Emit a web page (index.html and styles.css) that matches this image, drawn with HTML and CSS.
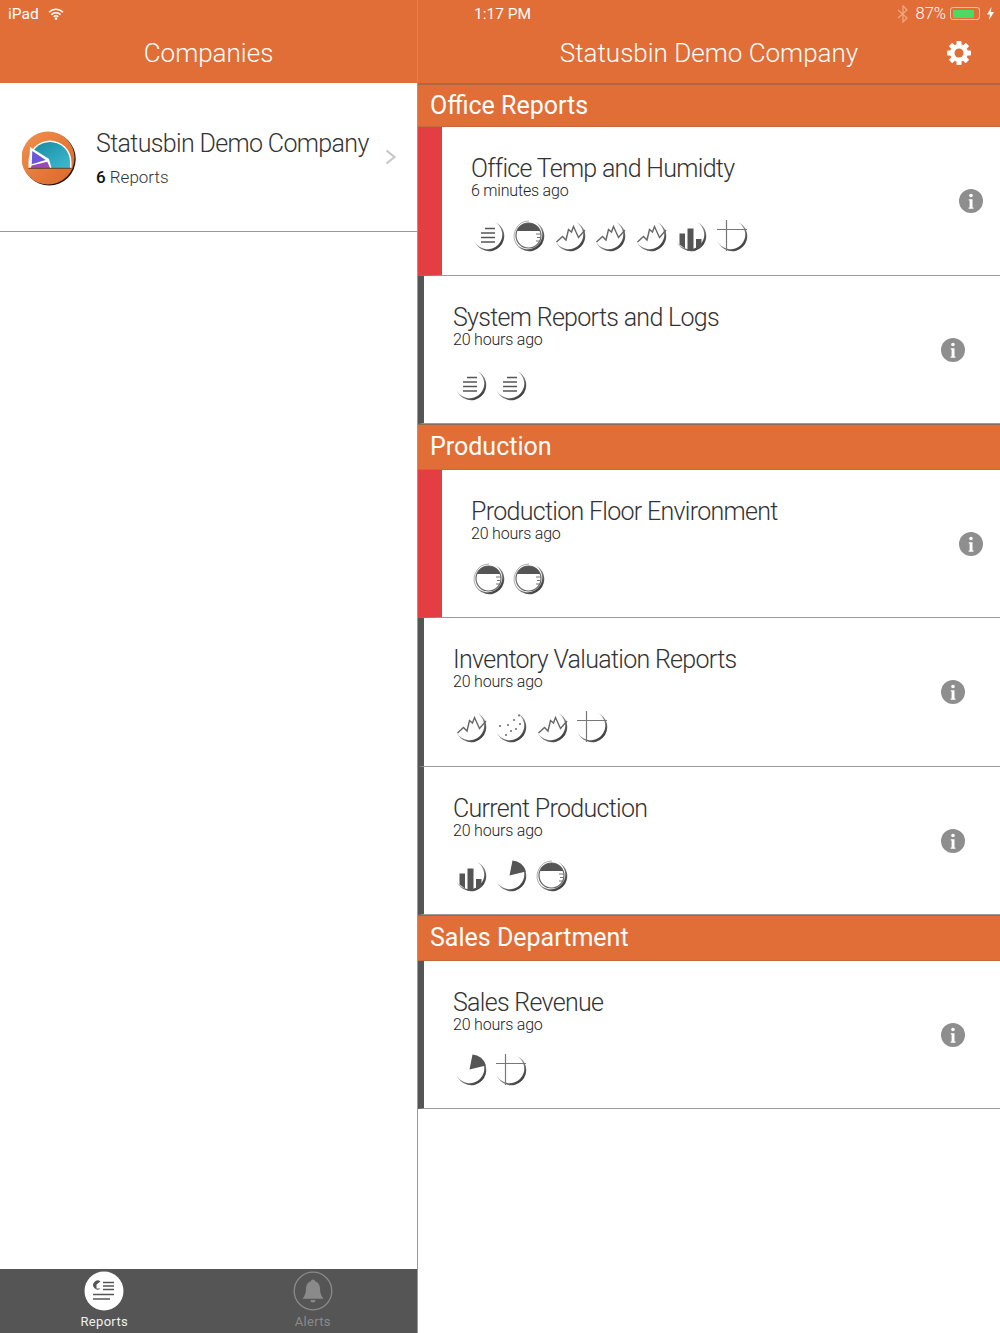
FILE: index.html
```html
<!DOCTYPE html>
<html lang="en">
<head>
  <meta charset="UTF-8">
  <meta name="viewport" content="width=device-width, initial-scale=1.0">
  <link rel="stylesheet" href="styles.css">
  <title>Statusbin</title>
</head>
<body>

  <!-- shared report type icons -->
  <svg class="defs" width="0" height="0">
    <defs>
      <linearGradient id="arc" gradientUnits="userSpaceOnUse" x1="5" y1="5" x2="26" y2="28">
        <stop offset="0.2" stop-color="#cfcfcf"/>
        <stop offset="0.55" stop-color="#858585"/>
        <stop offset="1" stop-color="#3a3a3a"/>
      </linearGradient>
      <symbol id="base" viewBox="0 0 32 32">
        <path d="M21 1.500A15.300 15.300 0 1 1 1.500 21A14.600 14.600 0 1 0 21 1.500Z" fill="url(#arc)"/>
      </symbol>
      <symbol id="i-list" viewBox="0 0 32 32">
        <use href="#base"/>
        <path d="M12 8.500h10M8 13h14M8 17.500h14M8 22h14" stroke="#555" stroke-width="1.500"/>
      </symbol>
      <symbol id="i-gauge" viewBox="0 0 32 32">
        <use href="#base"/>
        <path d="M16 1A15 15 0 0 0 5 26" fill="none" stroke="#999" stroke-width="0.800"/>
        <circle cx="15.500" cy="15.500" r="12.500" fill="none" stroke="#666" stroke-width="1.200"/>
        <path d="M3.800 11A12.500 12.500 0 0 1 27.200 11Z" fill="#555"/>
        <path d="M23 14h4.500M24 17.500h3.500M23 21h3.500" stroke="#777" stroke-width="1"/>
      </symbol>
      <symbol id="i-line" viewBox="0 0 32 32">
        <use href="#base"/>
        <path d="M2.500 22L8.500 16.500L12 20L14.500 9.500L17.500 12L19.500 6.500L24.500 17.500L31 10" fill="none" stroke="#666" stroke-width="1.400"/>
      </symbol>
      <symbol id="i-bars" viewBox="0 0 32 32">
        <use href="#base"/>
        <path d="M4.500 13.500h5.500V28.500L4.500 24.500ZM12.500 8.500h6V30.500h-6ZM21 19h5.500V26.500L21 29.500Z" fill="#555"/>
      </symbol>
      <symbol id="i-table" viewBox="0 0 32 32">
        <use href="#base"/>
        <path d="M1 9.500H31M10.500 0V31" fill="none" stroke="#777" stroke-width="1.200"/>
      </symbol>
      <symbol id="i-pie" viewBox="0 0 32 32">
        <use href="#base"/>
        <path d="M14.500 15.500L17.500 0.500A15 15 0 0 1 31 11.500Z" fill="#555"/>
      </symbol>
      <symbol id="i-dots" viewBox="0 0 32 32">
        <use href="#base"/>
        <g fill="#666">
          <circle cx="5" cy="15" r="1"/><circle cx="13" cy="14" r="1"/><circle cx="19" cy="9" r="1"/>
          <circle cx="24" cy="4.500" r="1"/><circle cx="21" cy="18" r="1"/><circle cx="11" cy="24" r="1"/>
          <circle cx="25" cy="13" r="1"/><circle cx="16" cy="20" r="1"/>
        </g>
      </symbol>
      <symbol id="i-info" viewBox="0 0 24 24">
        <circle cx="12" cy="12" r="12" fill="#8e8e8e"/>
        <circle cx="12" cy="6.500" r="1.800" fill="#fff"/>
        <path d="M9.800 10.200h3.700v8.300h1v1.200H9.600v-1.200h1v-7H9.800Z" fill="#fff"/>
      </symbol>
    </defs>
  </svg>

  <aside class="sidebar">
    <header class="top">
      <div class="status">
        <span>iPad</span>
        <svg class="wifi" width="16" height="12" viewBox="0 0 16 12">
          <path d="M1 4.200a10 10 0 0 1 14 0M3.400 6.600a6.600 6.600 0 0 1 9.200 0M5.700 8.800a3.300 3.300 0 0 1 4.600 0" fill="none" stroke="#fff" stroke-width="1.500"/>
          <circle cx="8" cy="10.600" r="1.300" fill="#fff"/>
        </svg>
      </div>
      <h1>Companies</h1>
    </header>

    <div class="company">
      <svg class="logo" width="56" height="56" viewBox="0 0 56 56">
        <defs>
          <linearGradient id="logo-bg" x1="0" y1="0" x2="1" y2="1">
            <stop offset="0" stop-color="#f2904e"/>
            <stop offset="1" stop-color="#d9682a"/>
          </linearGradient>
          <linearGradient id="logo-teal" x1="0" y1="0" x2="1" y2="1">
            <stop offset="0" stop-color="#17889f"/>
            <stop offset="1" stop-color="#3cbbd2"/>
          </linearGradient>
        </defs>
        <circle cx="27.200" cy="28" r="26.500" fill="#1c1410"/>
        <circle cx="26" cy="27" r="26.500" fill="url(#logo-bg)"/>
        <path d="M6.500 37V31a21.500 21.500 0 0 1 43 0v6Z" fill="#fff"/>
        <path d="M8 37V31a20 20 0 0 1 40 0v6Z" fill="url(#logo-teal)"/>
        <path d="M8 16L27 28L29.500 37H7Z" fill="#fff"/>
        <path d="M10.300 20L23.700 29L9.700 33.300Z" fill="#6a56d6"/>
        <path d="M9.700 34.500L25.300 30.700L28 37H8.700Z" fill="#9c48b8"/>
        <path d="M6.500 36.800H49.500V38H6.500Z" fill="#7a4a2c"/>
      </svg>
      <div class="company-text">
        <h2>Statusbin Demo Company</h2>
        <p><b>6</b> Reports</p>
      </div>
      <svg class="chevron" width="12" height="16" viewBox="0 0 12 16">
        <path d="M1.500 1.500L9.500 8L1.500 14.500" fill="none" stroke="#c7c7cc" stroke-width="2.200"/>
      </svg>
    </div>

    <nav class="tabs">
      <div class="tab active">
        <svg width="40" height="40" viewBox="0 0 40 40">
          <circle cx="20" cy="20" r="19.500" fill="#fff"/>
          <path d="M16.500 10.500A4.500 4.500 0 1 0 16.500 17.500H12.500V13.500Z" fill="#555"/>
          <path d="M19 11.500h11M19 15h11M19 18.500h11M9 23.500h21M9 28h17" stroke="#555" stroke-width="1.400"/>
        </svg>
        <span>Reports</span>
      </div>
      <div class="tab">
        <svg width="40" height="40" viewBox="0 0 40 40">
          <circle cx="20" cy="20" r="18.800" fill="none" stroke="#8a8a8a" stroke-width="1.300"/>
          <path d="M20 8.500c1.200 0 2 .8 2 1.800 3.500 1 5 4 5 8 0 4 1.500 7 3.500 9.500h-21c2-2.500 3.500-5.500 3.500-9.500 0-4 1.500-7 5-8 0-1 .8-1.800 2-1.800ZM17.500 29h5a2.500 2.500 0 0 1-5 0Z" fill="#8a8a8a"/>
        </svg>
        <span>Alerts</span>
      </div>
    </nav>
  </aside>

  <main class="content">
    <header class="top top-main">
      <div class="status status-main">
        <span class="clock">1:17 PM</span>
        <span class="status-right">
          <svg class="bt" width="12" height="18" viewBox="0 0 12 18">
            <path d="M1 5L10 13L6 17V1L10 5L1 13" fill="none" stroke="#f0a67f" stroke-width="1.300"/>
          </svg>
          <span class="percent">87%</span>
          <span class="battery"><span class="battery-fill"></span></span>
          <svg class="bolt" width="7" height="13" viewBox="0 0 7 13">
            <path d="M4.500 0L0 7.500H3L2 13L7 5H3.800Z" fill="#fff"/>
          </svg>
        </span>
      </div>
      <div class="title-row">
        <h1>Statusbin Demo Company</h1>
        <svg class="gear" width="26" height="26" viewBox="0 0 26 26">
          <g fill="#fff">
            <rect x="10.500" y="1" width="5" height="24" rx="0.800"/>
            <rect x="10.500" y="1" width="5" height="24" rx="0.800" transform="rotate(45 13 13)"/>
            <rect x="10.500" y="1" width="5" height="24" rx="0.800" transform="rotate(90 13 13)"/>
            <rect x="10.500" y="1" width="5" height="24" rx="0.800" transform="rotate(135 13 13)"/>
          </g>
          <circle cx="13" cy="13" r="7" fill="none" stroke="#fff" stroke-width="4"/>
          <circle cx="13" cy="13" r="4.500" fill="#e06e36"/>
        </svg>
      </div>
    </header>

    <h3 class="section first">Office Reports</h3>
    <article class="report alert">
      <div class="report-body">
        <h4>Office Temp and Humidty</h4>
        <p>6 minutes ago</p>
        <div class="icons">
          <svg><use href="#i-list"/></svg>
          <svg><use href="#i-gauge"/></svg>
          <svg><use href="#i-line"/></svg>
          <svg><use href="#i-line"/></svg>
          <svg><use href="#i-line"/></svg>
          <svg><use href="#i-bars"/></svg>
          <svg><use href="#i-table"/></svg>
        </div>
      </div>
      <svg class="info"><use href="#i-info"/></svg>
    </article>
    <article class="report">
      <div class="report-body">
        <h4>System Reports and Logs</h4>
        <p>20 hours ago</p>
        <div class="icons">
          <svg><use href="#i-list"/></svg>
          <svg><use href="#i-list"/></svg>
        </div>
      </div>
      <svg class="info"><use href="#i-info"/></svg>
    </article>

    <h3 class="section">Production</h3>
    <article class="report alert">
      <div class="report-body">
        <h4>Production Floor Environment</h4>
        <p>20 hours ago</p>
        <div class="icons">
          <svg><use href="#i-gauge"/></svg>
          <svg><use href="#i-gauge"/></svg>
        </div>
      </div>
      <svg class="info"><use href="#i-info"/></svg>
    </article>
    <article class="report">
      <div class="report-body">
        <h4>Inventory Valuation Reports</h4>
        <p>20 hours ago</p>
        <div class="icons">
          <svg><use href="#i-line"/></svg>
          <svg><use href="#i-dots"/></svg>
          <svg><use href="#i-line"/></svg>
          <svg><use href="#i-table"/></svg>
        </div>
      </div>
      <svg class="info"><use href="#i-info"/></svg>
    </article>
    <article class="report">
      <div class="report-body">
        <h4>Current Production</h4>
        <p>20 hours ago</p>
        <div class="icons">
          <svg><use href="#i-bars"/></svg>
          <svg><use href="#i-pie"/></svg>
          <svg><use href="#i-gauge"/></svg>
        </div>
      </div>
      <svg class="info"><use href="#i-info"/></svg>
    </article>

    <h3 class="section">Sales Department</h3>
    <article class="report">
      <div class="report-body">
        <h4>Sales Revenue</h4>
        <p>20 hours ago</p>
        <div class="icons">
          <svg><use href="#i-pie"/></svg>
          <svg><use href="#i-table"/></svg>
        </div>
      </div>
      <svg class="info"><use href="#i-info"/></svg>
    </article>
  </main>

</body>
</html>
```

FILE: styles.css
```css
:root {
  --orange: #e06e36;
  --dark: #555555;
  --line: #9a9a9a;
  --red: #e33e42;
  --text: #333333;
}

* {
  margin: 0;
  padding: 0;
  box-sizing: border-box;
}

html, body {
  height: 1333px;
  overflow: hidden;
}

body {
  display: flex;
  background-color: #fff;
  font-family: Roboto, "Liberation Sans", sans-serif;
  font-weight: 300;
  color: var(--text);
}

.defs {
  position: absolute;
}

/* headers */
.top {
  background-color: var(--orange);
  color: #fff;
  height: 83px;
  display: flex;
  flex-direction: column;
}

.top h1 {
  font-size: 26px;
  font-weight: 300;
  line-height: 30px;
  text-align: center;
}

.status {
  display: flex;
  align-items: center;
  gap: 9px;
  height: 27px;
  padding-left: 8px;
  font-size: 15.500px;
  font-weight: 400;
  flex-shrink: 0;
}

.sidebar .top h1 {
  margin-top: 11px;
}

/* left pane */
.sidebar {
  width: 418px;
  flex-shrink: 0;
  display: flex;
  flex-direction: column;
  border-right: 1px solid var(--line);
}

.company {
  height: 149px;
  display: flex;
  align-items: center;
  padding: 0 20px 0 22px;
  border-bottom: 1px solid var(--line);
}

.logo {
  flex-shrink: 0;
  margin-top: 4px;
}

.company-text {
  flex: 1;
  min-width: 0;
  padding: 2px 0 0 18px;
}

.company-text h2 {
  font-size: 25px;
  font-weight: 300;
  line-height: 30px;
  letter-spacing: -0.65px;
  white-space: nowrap;
}

.company-text p {
  font-size: 17px;
  line-height: 20px;
  margin-top: 8px;
}

.company-text b {
  font-weight: 500;
  color: #111;
}

.chevron {
  flex-shrink: 0;
}

.tabs {
  margin-top: auto;
  height: 64px;
  background-color: var(--dark);
  display: flex;
}

.tab {
  flex: 1;
  display: flex;
  flex-direction: column;
  align-items: center;
  padding-top: 2px;
  color: #8a8a8a;
  font-size: 13px;
  font-weight: 400;
}

.tab span {
  margin-top: 3px;
  letter-spacing: 0.3px;
}

.tab.active {
  color: #f0f0f0;
}

/* right pane */
.content {
  flex: 1;
  min-width: 0;
}

.top-main {
  height: 85px;
  border-bottom: 2px solid #b0673f;
}

.status-main {
  padding: 0 6px 0 56px;
  justify-content: space-between;
}

.status-right {
  display: flex;
  align-items: center;
  gap: 4px;
}

.bt {
  margin-right: 2px;
}

.percent {
  font-size: 16.500px;
  font-weight: 300;
}

.bolt {
  margin-left: 3px;
}

.battery {
  display: block;
  width: 30px;
  height: 13px;
  padding: 1.500px;
  border: 1px solid #f0c2a6;
  border-radius: 3px;
}

.battery-fill {
  display: block;
  height: 100%;
  width: 87%;
  background-color: #4cd964;
  border-radius: 1px;
}

.title-row {
  position: relative;
  margin-top: 11px;
}

.gear {
  position: absolute;
  right: 28px;
  top: 2px;
}

.section {
  background-color: var(--orange);
  color: #fff;
  font-size: 25px;
  font-weight: 400;
  height: 45.500px;
  line-height: 44px;
  padding-left: 12px;
  border-top: 1px solid #8f6a55;
  border-bottom: 1px solid #c4693b;
}

.section.first {
  height: 42px;
  line-height: 41px;
  border-top: 0;
}

.report {
  height: 148.500px;
  display: flex;
  align-items: center;
  border-left: 6px solid var(--dark);
  border-bottom: 1px solid var(--line);
  padding: 0 35px 0 29px;
}

.report.alert {
  border-left: 24px solid var(--red);
  padding-right: 17px;
}

.report-body {
  flex: 1;
  align-self: flex-start;
  padding-top: 27px;
}

.report h4 {
  font-size: 25px;
  font-weight: 300;
  line-height: 30px;
  letter-spacing: -0.7px;
}

.report p {
  font-size: 16px;
  line-height: 18px;
  margin-top: -2px;
  letter-spacing: -0.2px;
  color: #222;
}

.icons {
  display: flex;
  gap: 8.500px;
  margin: 20px 0 0 1.500px;
}

.icons svg {
  width: 32px;
  height: 32px;
  overflow: visible;
}

.info {
  width: 24px;
  height: 24px;
  flex-shrink: 0;
  margin-top: 1px;
}
```
